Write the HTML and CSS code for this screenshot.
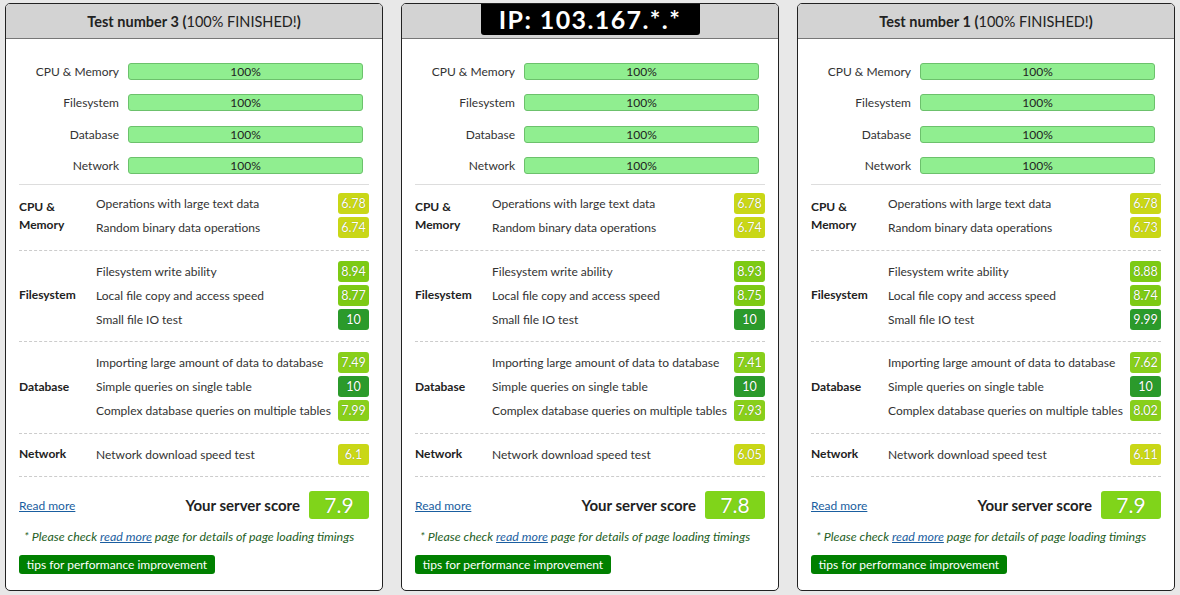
FILE: index.html
```html
<!DOCTYPE html>
<html>
<head>
<meta charset="utf-8">
<link rel="stylesheet" href="styles.css">
</head>
<body>
<div class="cards">
  <div class="card">
    <div class="card-head"><span class="title"><b>Test number 3</b> <b>(</b>100% FINISHED!<b>)</b></span></div>
    <div class="card-body">
      <div class="progress">
        <div class="prow"><span class="plabel">CPU &amp; Memory</span><div class="bar">100%</div></div>
        <div class="prow"><span class="plabel">Filesystem</span><div class="bar">100%</div></div>
        <div class="prow"><span class="plabel">Database</span><div class="bar">100%</div></div>
        <div class="prow"><span class="plabel">Network</span><div class="bar">100%</div></div>
      </div>
      <div class="section first">
        <div class="cat">CPU &amp;<br>Memory</div>
        <div class="items">
          <div class="item"><span>Operations with large text data</span><span class="badge c6">6.78</span></div>
          <div class="item"><span>Random binary data operations</span><span class="badge c6">6.74</span></div>
        </div>
      </div>
      <div class="section">
        <div class="cat">Filesystem</div>
        <div class="items">
          <div class="item"><span>Filesystem write ability</span><span class="badge c8">8.94</span></div>
          <div class="item"><span>Local file copy and access speed</span><span class="badge c8">8.77</span></div>
          <div class="item"><span>Small file IO test</span><span class="badge c10">10</span></div>
        </div>
      </div>
      <div class="section">
        <div class="cat">Database</div>
        <div class="items">
          <div class="item"><span>Importing large amount of data to database</span><span class="badge c7">7.49</span></div>
          <div class="item"><span>Simple queries on single table</span><span class="badge c10">10</span></div>
          <div class="item"><span>Complex database queries on multiple tables</span><span class="badge c7">7.99</span></div>
        </div>
      </div>
      <div class="section">
        <div class="cat">Network</div>
        <div class="items">
          <div class="item"><span>Network download speed test</span><span class="badge c6">6.1</span></div>
        </div>
      </div>
      <div class="score-row">
        <a class="readmore" href="#">Read more</a>
        <span class="score-label">Your server score</span>
        <span class="score">7.9</span>
      </div>
      <p class="note">* Please check <a href="#">read more</a> page for details of page loading timings</p>
      <span class="tips">tips for performance improvement</span>
    </div>
  </div>

  <div class="card">
    <div class="card-head"><span class="ip">IP: 103.167.*.*</span></div>
    <div class="card-body">
      <div class="progress">
        <div class="prow"><span class="plabel">CPU &amp; Memory</span><div class="bar">100%</div></div>
        <div class="prow"><span class="plabel">Filesystem</span><div class="bar">100%</div></div>
        <div class="prow"><span class="plabel">Database</span><div class="bar">100%</div></div>
        <div class="prow"><span class="plabel">Network</span><div class="bar">100%</div></div>
      </div>
      <div class="section first">
        <div class="cat">CPU &amp;<br>Memory</div>
        <div class="items">
          <div class="item"><span>Operations with large text data</span><span class="badge c6">6.78</span></div>
          <div class="item"><span>Random binary data operations</span><span class="badge c6">6.74</span></div>
        </div>
      </div>
      <div class="section">
        <div class="cat">Filesystem</div>
        <div class="items">
          <div class="item"><span>Filesystem write ability</span><span class="badge c8">8.93</span></div>
          <div class="item"><span>Local file copy and access speed</span><span class="badge c8">8.75</span></div>
          <div class="item"><span>Small file IO test</span><span class="badge c10">10</span></div>
        </div>
      </div>
      <div class="section">
        <div class="cat">Database</div>
        <div class="items">
          <div class="item"><span>Importing large amount of data to database</span><span class="badge c7">7.41</span></div>
          <div class="item"><span>Simple queries on single table</span><span class="badge c10">10</span></div>
          <div class="item"><span>Complex database queries on multiple tables</span><span class="badge c7">7.93</span></div>
        </div>
      </div>
      <div class="section">
        <div class="cat">Network</div>
        <div class="items">
          <div class="item"><span>Network download speed test</span><span class="badge c6">6.05</span></div>
        </div>
      </div>
      <div class="score-row">
        <a class="readmore" href="#">Read more</a>
        <span class="score-label">Your server score</span>
        <span class="score">7.8</span>
      </div>
      <p class="note">* Please check <a href="#">read more</a> page for details of page loading timings</p>
      <span class="tips">tips for performance improvement</span>
    </div>
  </div>

  <div class="card">
    <div class="card-head"><span class="title"><b>Test number 1</b> <b>(</b>100% FINISHED!<b>)</b></span></div>
    <div class="card-body">
      <div class="progress">
        <div class="prow"><span class="plabel">CPU &amp; Memory</span><div class="bar">100%</div></div>
        <div class="prow"><span class="plabel">Filesystem</span><div class="bar">100%</div></div>
        <div class="prow"><span class="plabel">Database</span><div class="bar">100%</div></div>
        <div class="prow"><span class="plabel">Network</span><div class="bar">100%</div></div>
      </div>
      <div class="section first">
        <div class="cat">CPU &amp;<br>Memory</div>
        <div class="items">
          <div class="item"><span>Operations with large text data</span><span class="badge c6">6.78</span></div>
          <div class="item"><span>Random binary data operations</span><span class="badge c6">6.73</span></div>
        </div>
      </div>
      <div class="section">
        <div class="cat">Filesystem</div>
        <div class="items">
          <div class="item"><span>Filesystem write ability</span><span class="badge c8">8.88</span></div>
          <div class="item"><span>Local file copy and access speed</span><span class="badge c8">8.74</span></div>
          <div class="item"><span>Small file IO test</span><span class="badge c10">9.99</span></div>
        </div>
      </div>
      <div class="section">
        <div class="cat">Database</div>
        <div class="items">
          <div class="item"><span>Importing large amount of data to database</span><span class="badge c7">7.62</span></div>
          <div class="item"><span>Simple queries on single table</span><span class="badge c10">10</span></div>
          <div class="item"><span>Complex database queries on multiple tables</span><span class="badge c7">8.02</span></div>
        </div>
      </div>
      <div class="section">
        <div class="cat">Network</div>
        <div class="items">
          <div class="item"><span>Network download speed test</span><span class="badge c6">6.11</span></div>
        </div>
      </div>
      <div class="score-row">
        <a class="readmore" href="#">Read more</a>
        <span class="score-label">Your server score</span>
        <span class="score">7.9</span>
      </div>
      <p class="note">* Please check <a href="#">read more</a> page for details of page loading timings</p>
      <span class="tips">tips for performance improvement</span>
    </div>
  </div>
</div>
</body>
</html>
```

FILE: styles.css
```css
* { box-sizing: border-box; }
html, body { margin: 0; padding: 0; }
body {
  background: #e8e8e8;
  font-family: Lato, "Noto Sans", sans-serif;
  font-size: 12px;
  color: #333;
}
.cards {
  display: grid;
  grid-template-columns: 378px 378px 378px;
  column-gap: 18px;
  padding: 3px 5px 0;
}
.card {
  height: 588px;
  background: #fff;
  border: 1px solid #222;
  border-radius: 5px;
  overflow: hidden;
  display: flex;
  flex-direction: column;
}
.card-head {
  flex-shrink: 0;
  height: 35px;
  background: #d3d3d3;
  border-bottom: 1px solid #777;
  display: flex;
  justify-content: center;
  align-items: center;
}
.title {
  font-size: 14.5px;
  color: #222;
  white-space: nowrap;
}
.title b { font-weight: 700; }
.ip {
  align-self: flex-start;
  background: #000;
  color: #fff;
  font-weight: 700;
  font-size: 25px;
  line-height: 31px;
  height: 31px;
  width: 219px;
  text-align: center;
  border-radius: 0 0 3px 3px;
  letter-spacing: 1.4px;
  white-space: nowrap;
}
.card-body {
  flex-shrink: 0;
  padding: 0 13px;
  display: flex;
  flex-direction: column;
}
.progress {
  padding: 24px 6px 10px 0;
  border-bottom: 1px solid #ddd;
  display: flex;
  flex-direction: column;
  gap: 14.4px;
}
.prow {
  display: flex;
  align-items: center;
  gap: 9px;
}
.plabel {
  width: 100px;
  text-align: right;
  color: #333;
  white-space: nowrap;
}
.bar {
  flex: 1;
  height: 17px;
  background: #90ee90;
  border: 1px solid #6cc16c;
  border-radius: 3px;
  text-align: center;
  line-height: 15px;
  color: #222;
}
.section {
  display: flex;
  align-items: center;
  padding: 10px 0 11.5px;
  border-top: 1px dashed #ccc;
}
.section.first { border-top: none; padding-top: 8px; }
.cat {
  width: 77px;
  flex-shrink: 0;
  font-weight: 700;
  font-size: 12px;
  line-height: 18px;
  color: #222;
}
.items {
  flex: 1;
  display: flex;
  flex-direction: column;
  gap: 3px;
}
.item {
  display: flex;
  justify-content: space-between;
  align-items: center;
  height: 21px;
  color: #333;
  white-space: nowrap;
}
.badge {
  min-width: 31px;
  height: 21px;
  line-height: 21px;
  padding: 0 3px;
  border-radius: 3px;
  text-align: center;
  color: #fff;
  font-size: 12.5px;
  text-shadow: 0 0 1px rgba(0,0,0,0.35);
}
.c6 { background: #c9d717; }
.c7 { background: #88cf1b; }
.c8 { background: #7dca14; }
.c10 { background: #2b9a2b; }
.score-row {
  display: flex;
  align-items: center;
  border-top: 1px dashed #ccc;
  padding-top: 14px;
}
.readmore {
  color: #1a5ea0;
  text-decoration: underline;
  margin-right: auto;
}
.score-label {
  font-weight: 700;
  font-size: 15px;
  color: #222;
  margin-right: 9px;
}
.score {
  width: 60px;
  height: 28px;
  line-height: 28px;
  text-align: center;
  background: #80d41a;
  border-radius: 3px;
  color: #fff;
  font-size: 21px;
  text-shadow: 0 0 1px rgba(0,0,0,0.3);
}
.note {
  margin: 9px 0 0;
  padding-left: 5px;
  font-style: italic;
  font-size: 12.4px;
  color: #245e24;
  line-height: 18px;
  white-space: nowrap;
}
.note a { color: #1a5ea0; }
.tips {
  align-self: flex-start;
  margin-top: 9px;
  background: #008000;
  color: #fff;
  height: 19px;
  line-height: 19px;
  width: 196px;
  text-align: center;
  border-radius: 3px;
}
```
